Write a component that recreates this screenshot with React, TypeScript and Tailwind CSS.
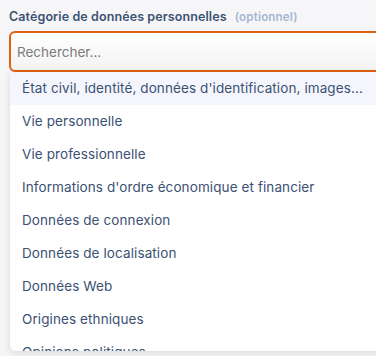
const items = [
  "État civil, identité, données d'identification, images...",
  "Vie personnelle",
  "Vie professionnelle",
  "Informations d'ordre économique et financier",
  "Données de connexion",
  "Données de localisation",
  "Données Web",
  "Origines ethniques",
  "Opinions politiques",
  "Opinions philosophiques",
];

export default function App() {
  return (
    <div className="w-[376px] h-[356px] overflow-hidden bg-[#f6f6f8] font-['Inter',sans-serif]">
      <div className="pl-[9px] pt-[8px]">
        <div className="flex h-[17px] items-baseline gap-[8px] whitespace-nowrap">
          <span className="text-[12.5px] font-semibold tracking-[0.1px] text-[#3c5274]">Catégorie de données personnelles</span>
          <span className="text-[11.5px] font-semibold tracking-[0.2px] text-[#a3b6d0]">(optionnel)</span>
        </div>
        <div className="relative mt-[6px] w-[420px]">
          <input
            className="block h-[41px] w-full rounded-[6px] border-2 border-[#e0620f] bg-gradient-to-b from-white to-[#f3f3f3] px-[6px] text-[13.5px] text-[#333] outline-none placeholder:text-[#7b7b7b]"
            placeholder="Rechercher..."
          />
          <ul className="absolute left-[1px] right-0 top-[41px] h-[279px] overflow-hidden rounded-b-[6px] bg-white shadow-[0_2px_8px_rgba(0,0,0,0.12)]">
            {items.map((item, i) => (
              <li
                key={item}
                className={`flex h-[33px] items-center whitespace-nowrap pl-[12px] text-[13.5px] tracking-[0.1px] text-[#3b5173] ${
                  i === 0 ? "bg-[#f5f6fd]" : ""
                }`}
              >
                {item}
              </li>
            ))}
          </ul>
        </div>
      </div>
    </div>
  );
}
